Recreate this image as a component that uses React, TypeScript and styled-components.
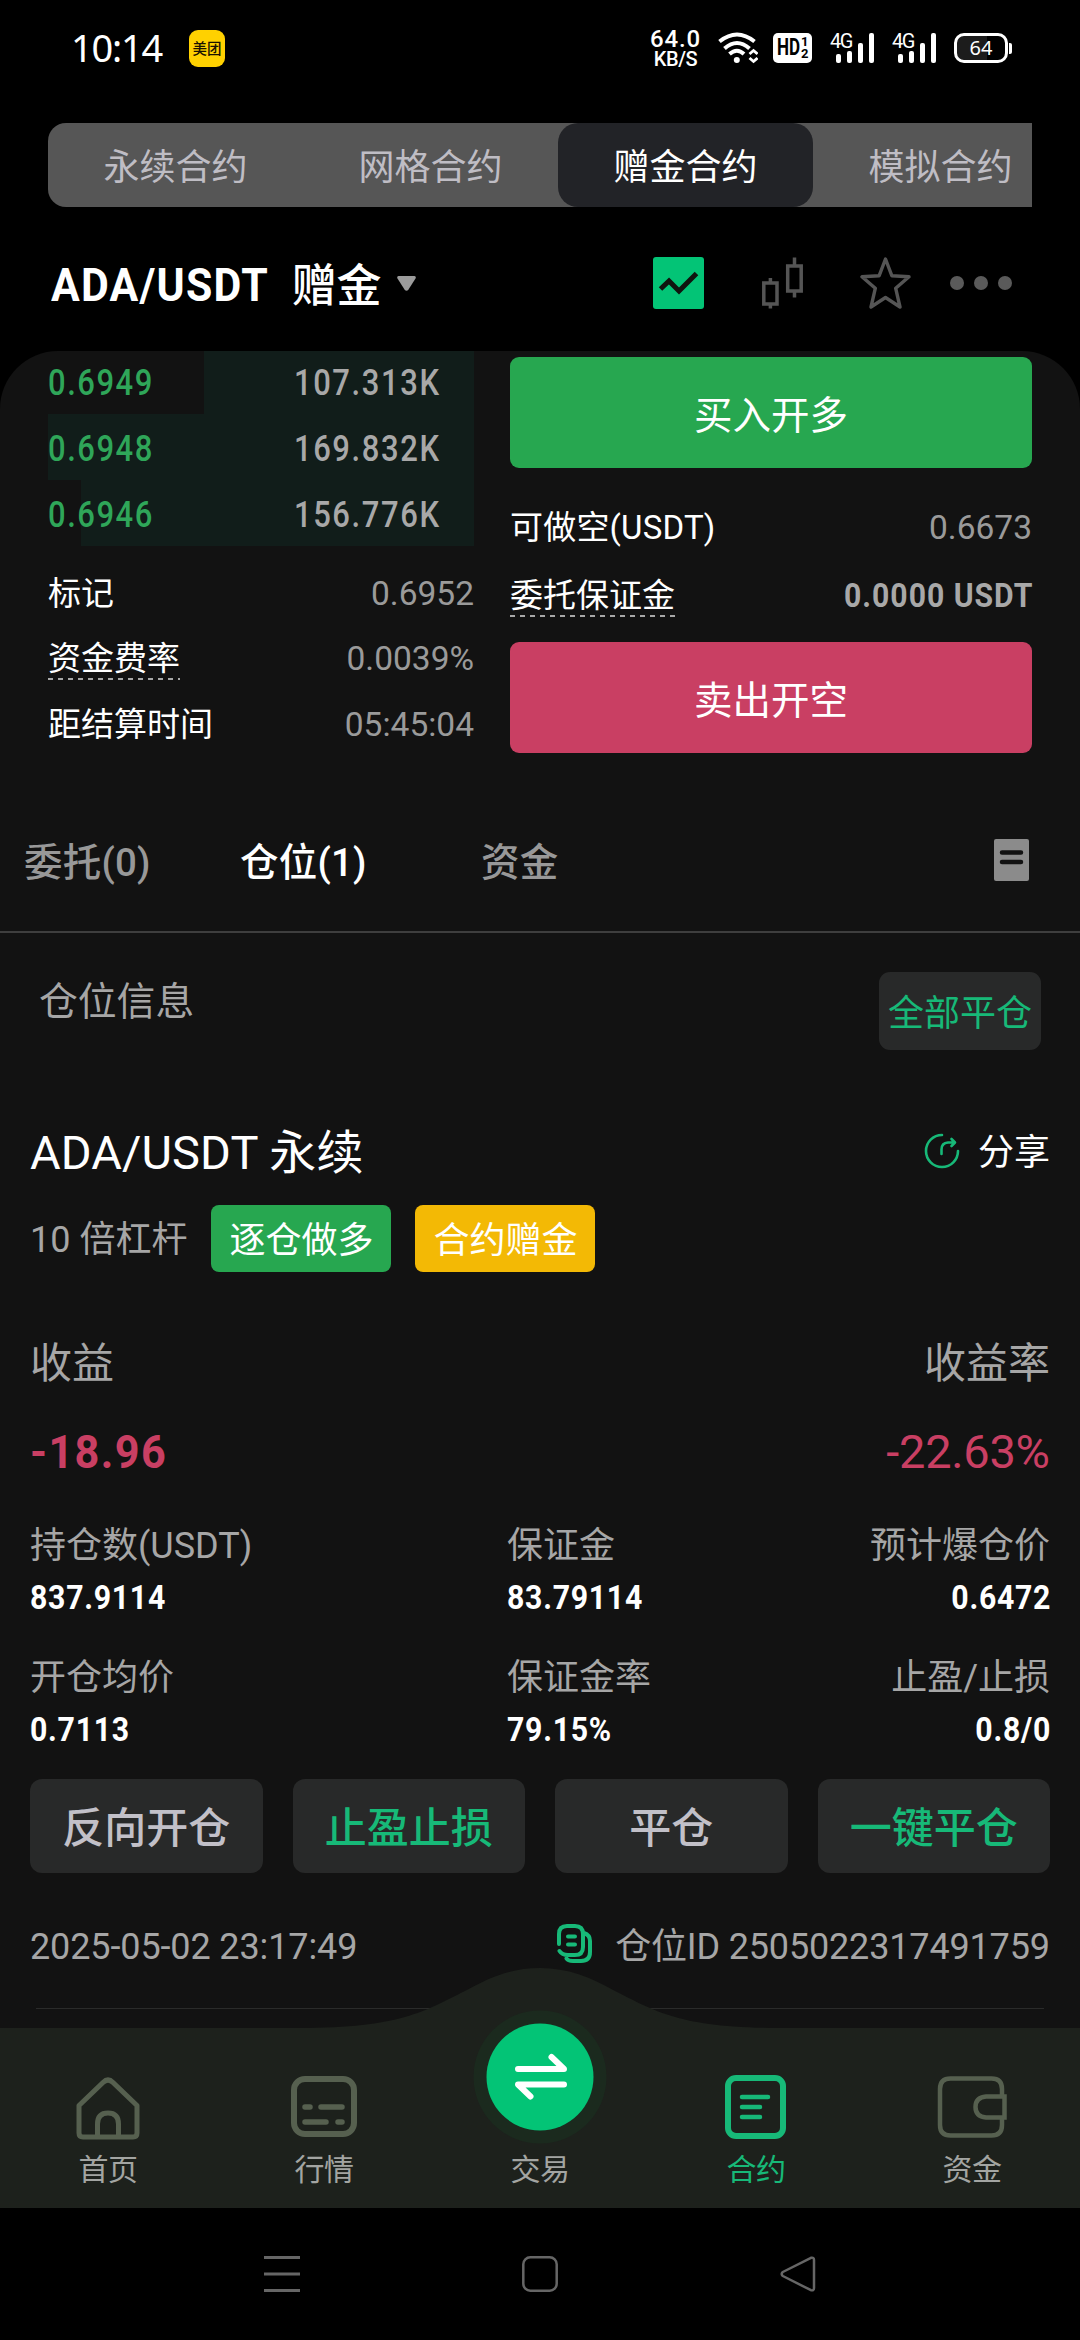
import React from "react";
import styled, { createGlobalStyle, css } from "styled-components";

const GlobalStyle = createGlobalStyle`
  * { box-sizing: border-box; }
  html, body { margin: 0; padding: 0; background: #000; }
  body { font-family: Roboto, "Noto Sans CJK SC", sans-serif; color: #fff; }
`;

const palette = {
  sheet: "#121212",
  muted: "#a6a6a6",
  green: "#27a750",
  accent: "#17b978",
  bright: "#03c476",
  red: "#c93f63",
  yellow: "#f3b905",
  chip: "#282929",
  nav: "#1d211c",
  navIcon: "#56604f",
};

const Screen = styled.div`
  width: 1080px;
  height: 2340px;
  display: flex;
  flex-direction: column;
  background: #000;
  overflow: hidden;
`;

/* One run of text: size, weight, colour and tracking vary by use. */
const Text = styled.span<{
  $size: number;
  $color?: string;
  $weight?: number;
  $track?: number;
}>`
  font-size: ${(p) => p.$size}px;
  line-height: ${(p) => Math.round(p.$size * 1.2)}px;
  color: ${(p) => p.$color ?? "#fff"};
  font-weight: ${(p) => p.$weight ?? 400};
  letter-spacing: ${(p) => p.$track ?? 0}px;
  margin-right: ${(p) => -(p.$track ?? 0)}px;
  white-space: nowrap;
`;

const Figure = styled(Text)<{ $narrow: number; $end?: boolean }>`
  display: inline-block;
  transform: scaleX(${(p) => p.$narrow});
  transform-origin: ${(p) => (p.$end ? "right" : "left")} center;
`;

/* ---------- status bar ---------- */
const StatusBar = styled.header`
  flex: none;
  height: 123px;
  padding: 25px 68px 0 71px;
  display: flex;
  justify-content: space-between;
  align-items: flex-start;
`;
const StatusSide = styled.div`
  height: 46px;
  display: flex;
  align-items: center;
`;
const Clock = styled.span`
  font-family: "Noto Sans", sans-serif;
  font-size: 38px;
  line-height: 46px;
  letter-spacing: -1.2px;
  width: 118px;
  padding-bottom: 3px;
`;
const Badge = styled.span`
  width: 36px;
  height: 37px;
  border-radius: 9px;
  background: #ffd100;
  color: #1a1200;
  font-family: "Noto Sans CJK SC", sans-serif;
  font-weight: 500;
  font-size: 14.5px;
  line-height: 36px;
  text-align: center;
`;
const Speed = styled.div`
  width: 51px;
  padding-top: 3px;
  display: flex;
  flex-direction: column;
  align-items: center;
  font-weight: 500;
`;
const SpeedValue = styled.span`
  font-size: 24px;
  line-height: 20px;
  letter-spacing: 0.9px;
`;
const SpeedUnit = styled.span`
  font-size: 20px;
  line-height: 21px;
  letter-spacing: -0.4px;
`;
const WifiSvg = styled.svg`
  margin-left: 17px;
`;
const Hd = styled.span`
  margin-left: 15px;
  width: 39px;
  height: 30px;
  padding-left: 4px;
  border-radius: 5px;
  background: #fff;
  color: #000;
  display: flex;
  align-items: center;
  font-weight: 700;
`;
const HdLetters = styled.span`
  width: 24px;
  font-size: 23px;
  line-height: 30px;
  transform: scaleX(0.74);
  transform-origin: left center;
`;
const HdStack = styled.span`
  display: flex;
  flex-direction: column;
  font-size: 13px;
  line-height: 12px;
`;
const Signal = styled.div<{ $gap: number }>`
  margin-left: ${(p) => p.$gap}px;
  width: 44px;
  height: 30px;
  position: relative;
`;
const SignalLabel = styled.span`
  position: absolute;
  left: 0;
  top: -1px;
  font-size: 20px;
  line-height: 18px;
  letter-spacing: -1.4px;
`;
const SignalBars = styled.div`
  height: 30px;
  padding-left: 6px;
  display: flex;
  align-items: flex-end;
  gap: 6px;
`;
const Bar = styled.i<{ $h: number }>`
  width: 5px;
  height: ${(p) => p.$h}px;
  border-radius: 2px;
  background: #fff;
`;
const Battery = styled.div`
  margin-left: 18px;
  width: 54px;
  height: 30px;
  border: 3px solid #fff;
  border-radius: 10px;
  background: linear-gradient(90deg, #1c1c1c 62%, #000 62%);
  font-family: "Noto Sans", sans-serif;
  font-size: 20px;
  line-height: 23px;
  text-align: center;
`;
const BatteryNub = styled.i`
  margin-left: 1px;
  width: 3px;
  height: 11px;
  border-radius: 0 2px 2px 0;
  background: #fff;
`;

/* ---------- contract type tabs ---------- */
const TypeTabs = styled.nav`
  flex: none;
  margin: 0 48px;
  height: 84px;
  display: flex;
  border-radius: 18px 0 0 18px;
  background: #565656;
  overflow: hidden;
`;
const TypeTab = styled.div<{ $active?: boolean }>`
  flex: none;
  width: 255px;
  padding-top: 6px;
  border-radius: 20px;
  display: flex;
  align-items: center;
  justify-content: center;
  font-size: 36px;
  line-height: 44px;
  color: ${(p) => (p.$active ? "#fff" : "#bfbdc4")};
  background: ${(p) => (p.$active ? "#222327" : "transparent")};
`;

/* ---------- pair header ---------- */
const PairHeader = styled.div`
  flex: none;
  height: 144px;
  padding: 8px 68px 0 51px;
  display: flex;
  justify-content: space-between;
  align-items: center;
`;
const PairTitle = styled.div`
  display: flex;
  align-items: center;
`;
const PairName = styled(Figure)`
  width: 217px;
  padding-top: 5px;
`;
const PairKind = styled.span`
  margin-left: 25px;
  padding-top: 8px;
  font-size: 45px;
  line-height: 54px;
  font-weight: 500;
  letter-spacing: -0.3px;
`;
const Caret = styled.svg`
  margin-left: 16px;
`;
const Tools = styled.div`
  display: flex;
  align-items: center;
  svg:nth-child(2) { margin-left: 58px; }
  svg:nth-child(3) { margin-left: 57px; }
  svg:nth-child(4) { margin-left: 39px; }
`;

/* ---------- sheet ---------- */
const Sheet = styled.main`
  flex: 1;
  min-height: 0;
  border-radius: 58px 58px 0 0;
  background: ${palette.sheet};
  overflow: hidden;
  display: flex;
  flex-direction: column;
`;
const Trade = styled.section`
  flex: none;
  height: 439px;
  padding: 0 48px;
  display: grid;
  grid-template-columns: 426px 522px;
  column-gap: 36px;
`;
const Column = styled.div`
  display: flex;
  flex-direction: column;
`;
const OrderColumn = styled(Column)`
  padding-top: 6px;
`;
const BookRow = styled.div<{ $start: number; $cut?: boolean }>`
  flex: none;
  height: ${(p) => (p.$cut ? 63 : 66)}px;
  padding: ${(p) => (p.$cut ? 1 : 4)}px 35px 0 0;
  display: flex;
  justify-content: space-between;
  align-items: center;
  background: linear-gradient(
    90deg,
    transparent ${(p) => p.$start}px,
    #111d1a ${(p) => p.$start}px
  );
`;
const StatRow = styled.div`
  flex: none;
  height: 65.5px;
  display: flex;
  justify-content: space-between;
  align-items: center;
`;
const StatGroup = styled.div`
  margin-top: 15px;
`;
const Hint = styled.span<{ $drop: number }>`
  display: inline-block;
  font-size: 33px;
  line-height: 40px;
  white-space: nowrap;
  padding-bottom: ${(p) => p.$drop}px;
  margin-bottom: -${(p) => p.$drop}px;
  background: repeating-linear-gradient(90deg, #a8a8a8 0 5px, transparent 5px 10px)
    left bottom / 100% 2px no-repeat;
`;
const OrderButton = styled.button<{ $color: string }>`
  flex: none;
  height: 111px;
  border: 0;
  border-radius: 9px;
  padding: 6px 0 0;
  background: ${(p) => p.$color};
  color: #fff;
  font: inherit;
  font-size: 38.5px;
  line-height: 46px;
`;
const OrderStats = styled.div`
  flex: none;
  height: 174px;
  padding-top: 26px;
`;
const OrderStat = styled(StatRow)`
  height: 68px;
`;

/* ---------- position tabs ---------- */
const PositionTabs = styled.nav`
  flex: none;
  height: 143px;
  padding: 5px 51px 0 24px;
  border-bottom: 2px solid #3e3e3e;
  display: flex;
  align-items: center;
`;
const PositionTab = styled.span<{ $active?: boolean; $w: number }>`
  width: ${(p) => p.$w}px;
  font-size: 38.5px;
  line-height: 46px;
  font-weight: 500;
  letter-spacing: 0.2px;
  color: ${(p) => (p.$active ? "#fff" : "#989898")};
`;
const Spacer = styled.div`
  flex: 1;
`;
const RecordsIcon = styled.svg`
  margin-bottom: 6px;
`;
const InfoHead = styled.div`
  flex: none;
  height: 144px;
  padding: 39px 39px 0 39px;
  display: flex;
  justify-content: space-between;
  align-items: flex-start;
`;
const InfoTitle = styled(Text)`
  margin-top: 6px;
`;
const CloseAll = styled.button`
  width: 162px;
  height: 78px;
  border: 0;
  border-radius: 11px;
  padding: 6px 0 0;
  background: ${palette.chip};
  color: ${palette.accent};
  font: inherit;
  font-size: 36px;
  line-height: 44px;
  white-space: nowrap;
`;

/* ---------- position card ---------- */
const Card = styled.section`
  flex: none;
  padding: 0 30px;
  display: flex;
  flex-direction: column;
`;
const Line = styled.div<{ $h: number }>`
  height: ${(p) => p.$h}px;
  display: flex;
  align-items: center;
  justify-content: space-between;
`;
const TitleLine = styled(Line)`
  padding-top: 32px;
`;
const Share = styled.div`
  display: flex;
  align-items: center;
  gap: 18px;
`;
const ShareIcon = styled.svg`
  margin-bottom: 4px;
`;
const TagLine = styled.div`
  height: 67px;
  margin-top: 8px;
  display: flex;
  align-items: center;
`;
const Leverage = styled(Text)`
  padding-top: 4px;
`;
const Tag = styled.span<{ $color: string; $gap: number }>`
  width: 180px;
  height: 67px;
  margin-left: ${(p) => p.$gap}px;
  padding-top: 4px;
  border-radius: 8px;
  background: ${(p) => p.$color};
  font-size: 36px;
  line-height: 64px;
  text-align: center;
`;
const LabelLine = styled(Line)`
  margin-top: 62px;
`;
const ProfitLine = styled(Line)`
  margin-top: 28px;
  margin-bottom: 43px;
`;
const Metrics = styled.div`
  display: grid;
  grid-template-columns: 477px 1fr 1fr;
  grid-template-rows: 132px 122px;
`;
const Metric = styled.div<{ $end?: boolean }>`
  display: flex;
  flex-direction: column;
  gap: 9px;
  ${(p) =>
    p.$end &&
    css`
      align-items: flex-end;
    `}
`;
const Actions = styled.div`
  display: grid;
  grid-template-columns: repeat(4, 1fr);
  column-gap: 30px;
`;
const Action = styled.button<{ $accent?: boolean }>`
  height: 94px;
  border: 0;
  border-radius: 12px;
  padding: 6px 0 0;
  background: ${palette.chip};
  color: ${(p) => (p.$accent ? palette.accent : "#c2c0c8")};
  font: inherit;
  font-size: 42px;
  line-height: 50px;
  font-weight: 500;
`;
const IdLine = styled(Line)`
  padding-top: 14px;
`;
const IdGroup = styled.div`
  display: flex;
  align-items: center;
  gap: 23px;
`;
const CopyIcon = styled.svg`
  margin-bottom: 8px;
`;
const Divider = styled.hr`
  width: 1008px;
  height: 1px;
  margin: 0 auto;
  border: 0;
  background: #2a2b2a;
`;

/* ---------- app navigation ---------- */
const AppNav = styled.nav`
  flex: none;
  position: relative;
  height: 180px;
  background: ${palette.nav};
  display: grid;
  grid-template-columns: repeat(5, 216px);
`;
const Hump = styled.svg`
  position: absolute;
  left: 300px;
  top: -61px;
`;
const NavItem = styled.div<{ $active?: boolean }>`
  position: relative;
  display: flex;
  flex-direction: column;
  align-items: center;
  padding-top: 46px;
  color: ${(p) => (p.$active ? palette.accent : palette.navIcon)};
`;
const NavLabel = styled.span<{ $active?: boolean }>`
  margin-top: 12px;
  font-size: 30px;
  line-height: 36px;
  letter-spacing: -0.5px;
  color: ${(p) => (p.$active ? palette.accent : "#a3a5a2")};
`;
const SwapButton = styled.svg`
  margin: -64px 0 -4px;
`;

const SystemNav = styled.footer`
  flex: none;
  height: 132px;
  display: flex;
  justify-content: center;
  align-items: center;
  gap: 222px;
`;

const SignalIcon = ({ gap }: { gap: number }) => (
  <Signal $gap={gap}>
    <SignalLabel>4G</SignalLabel>
    <SignalBars>
      {[9, 12, 20, 30].map((h) => (
        <Bar key={h} $h={h} />
      ))}
    </SignalBars>
  </Signal>
);

const navIcons = {
  home: (
    <svg width="66" height="66" viewBox="0 0 66 66" fill="none" stroke="currentColor" strokeWidth="5" strokeLinejoin="round">
      <path d="M4 31.5 28 8.5Q33 3.5 38 8.5L62 31.5V59Q62 63 58 63H8Q4 63 4 59Z" />
      <path d="M22.5 63V50Q22.500 39 33 39T43.500 50V63" />
    </svg>
  ),
  quotes: (
    <svg width="66" height="66" viewBox="0 0 66 66" fill="none" stroke="currentColor" strokeWidth="6" strokeLinecap="round">
      <rect x="3" y="5" width="60" height="55" rx="11" />
      <path d="M14 33h5M30 33h21M14 48h21M47 48h4" strokeWidth="5.500" />
    </svg>
  ),
  contract: (
    <svg width="66" height="66" viewBox="0 0 66 66" fill="none" stroke="currentColor" strokeWidth="6" strokeLinecap="round">
      <rect x="5" y="4" width="55" height="58" rx="8" />
      <path d="M19 23h26M19 33h18M19 43h18" strokeWidth="4.500" />
    </svg>
  ),
  wallet: (
    <svg width="70" height="66" viewBox="0 0 70 66" fill="none" stroke="currentColor" strokeWidth="4.500">
      <path d="M65 23V15Q65 4.500 54.500 4.500H13.500Q3 4.500 3 15V51Q3 61.500 13.500 61.500H54.500Q65 61.500 65 51V43" />
      <path d="M67.500 22.500V43.500H49Q38.500 42.500 38.500 33T49 22.500Z" />
    </svg>
  ),
};

const metrics = [
  ["持仓数(USDT)", "837.9114"],
  ["保证金", "83.79114"],
  ["预计爆仓价", "0.6472"],
  ["开仓均价", "0.7113"],
  ["保证金率", "79.15%"],
  ["止盈/止损", "0.8/0"],
];

const book = [
  { price: "0.6949", size: "107.313K", start: 156 },
  { price: "0.6948", size: "169.832K", start: 0 },
  { price: "0.6946", size: "156.776K", start: 33 },
];

export default function App() {
  return (
    <Screen>
      <GlobalStyle />
      <StatusBar>
        <StatusSide>
          <Clock>10:14</Clock>
          <Badge>美团</Badge>
        </StatusSide>
        <StatusSide>
          <Speed>
            <SpeedValue>64.0</SpeedValue>
            <SpeedUnit>KB/S</SpeedUnit>
          </Speed>
          <WifiSvg width="40" height="32" viewBox="0 0 40 32" fill="none" stroke="#fff" strokeWidth="4">
            <path d="M1.500 9.500Q19 -4.500 36.500 9.500M6.500 16.500Q19 5.500 31.500 16.500M11.500 22Q19 15.500 26 22" />
            <circle cx="18.800" cy="28" r="3" fill="#fff" stroke="none" />
            <path d="M31.500 22 35.500 18.500 39.500 22M31.500 26 35.500 29.500 39.500 26" strokeWidth="2.800" />
          </WifiSvg>
          <Hd>
            <HdLetters>HD</HdLetters>
            <HdStack>
              <span>1</span>
              <span>2</span>
            </HdStack>
          </Hd>
          <SignalIcon gap={18} />
          <SignalIcon gap={18} />
          <Battery>64</Battery>
          <BatteryNub />
        </StatusSide>
      </StatusBar>

      <TypeTabs>
        <TypeTab>永续合约</TypeTab>
        <TypeTab>网格合约</TypeTab>
        <TypeTab $active>赠金合约</TypeTab>
        <TypeTab>模拟合约</TypeTab>
      </TypeTabs>

      <PairHeader>
        <PairTitle>
          <PairName $size={46} $weight={700} $narrow={0.93} $track={1.3}>ADA/USDT</PairName>
          <PairKind>赠金</PairKind>
          <Caret width="19" height="15" viewBox="0 0 19 15">
            <path d="M1.500 0H17.500Q19.500 .5 18.500 2.500L11.500 13.500Q9.500 16 7.500 13.500L.5 2.500Q-.5 .5 1.500 0Z" fill="#9b9b9b" />
          </Caret>
        </PairTitle>
        <Tools>
          <svg width="51" height="52" viewBox="0 0 51 52">
            <rect width="51" height="52" rx="3" fill={palette.bright} />
            <path d="M7.500 32 16 24 26 34 43.500 16.500" fill="none" stroke="#10150f" strokeWidth="5" />
          </svg>
          <svg width="41" height="52" viewBox="0 0 41 52" fill="none" stroke="#555" strokeWidth="3.500">
            <path d="M1.800 26h13.200v21H1.800zM25.700 9h13.500v25H25.700zM8.400 26v-5M8.400 47v4.500M32.500 9V0.500M32.500 34v6.500" />
          </svg>
          <svg width="51" height="52" viewBox="0 0 51 52" fill="none" stroke="#555" strokeWidth="3.400" strokeLinejoin="round">
            <path d="M25.500 2 31.800 18.700 49 19.800 35.700 31.300 40 50 25.500 40.500 11 50 15.300 31.300 2 19.800 19.200 18.700Z" />
          </svg>
          <svg width="62" height="14" viewBox="0 0 62 14" fill="#5a5a5a">
            <circle cx="7" cy="7" r="7" />
            <circle cx="31" cy="7" r="7" />
            <circle cx="55" cy="7" r="7" />
          </svg>
        </Tools>
      </PairHeader>

      <Sheet>
        <Trade>
          <Column>
            {book.map((r, i) => (
              <BookRow key={r.price} $start={r.start} $cut={i === 0}>
                <Figure $size={36} $weight={500} $color="#2fa659" $narrow={0.86} $track={1.8}>
                  {r.price}
                </Figure>
                <Figure $size={36} $weight={500} $color="#a8a8a8" $narrow={0.86} $track={1.9} $end>
                  {r.size}
                </Figure>
              </BookRow>
            ))}
            <StatGroup>
              <StatRow>
                <Text $size={33}>标记</Text>
                <Text $size={33.5} $color="#9a9a9a">0.6952</Text>
              </StatRow>
              <StatRow>
                <Hint $drop={1}>资金费率</Hint>
                <Text $size={33.5} $color="#9a9a9a">0.0039%</Text>
              </StatRow>
              <StatRow>
                <Text $size={33}>距结算时间</Text>
                <Text $size={33.5} $color="#9a9a9a">05:45:04</Text>
              </StatRow>
            </StatGroup>
          </Column>
          <OrderColumn>
            <OrderButton $color={palette.green}>买入开多</OrderButton>
            <OrderStats>
              <OrderStat>
                <Text $size={33} $track={0.2}>可做空(USDT)</Text>
                <Text $size={33.5} $color="#9a9a9a">0.6673</Text>
              </OrderStat>
              <OrderStat>
                <Hint $drop={1}>委托保证金</Hint>
                <Figure $size={33.5} $weight={700} $color="#a8a8a8" $narrow={0.9} $track={1.1} $end>
                  0.0000 USDT
                </Figure>
              </OrderStat>
            </OrderStats>
            <OrderButton $color={palette.red}>卖出开空</OrderButton>
          </OrderColumn>
        </Trade>

        <PositionTabs>
          <PositionTab $w={216}>委托(0)</PositionTab>
          <PositionTab $w={241} $active>仓位(1)</PositionTab>
          <PositionTab $w={80}>资金</PositionTab>
          <Spacer />
          <RecordsIcon width="35" height="42" viewBox="0 0 35 42">
            <rect width="35" height="42" rx="2" fill="#8b8b8b" />
            <path d="M8 13.500H27M8 23H27" stroke="#121212" strokeWidth="4.500" strokeLinecap="round" />
          </RecordsIcon>
        </PositionTabs>

        <InfoHead>
          <InfoTitle $size={38.8} $color={palette.muted}>仓位信息</InfoTitle>
          <CloseAll>全部平仓</CloseAll>
        </InfoHead>

        <Card>
          <TitleLine $h={120}>
            <Text $size={47} $track={0.1}>ADA/USDT 永续</Text>
            <Share>
              <ShareIcon width="36" height="36" viewBox="0 0 36 36" fill="none" stroke={palette.accent} strokeWidth="2.600" strokeLinecap="round" strokeLinejoin="round">
                <path d="M18 2A16 16 0 1 0 34 18M17.500 21V16.500Q17.500 10 24 9.500H30M27.500 6 31 9.500 27.500 13" />
              </ShareIcon>
              <Text $size={36}>分享</Text>
            </Share>
          </TitleLine>
          <TagLine>
            <Leverage $size={36} $color={palette.muted}>10 倍杠杆</Leverage>
            <Tag $color={palette.green} $gap={24}>逐仓做多</Tag>
            <Tag $color={palette.yellow} $gap={24}>合约赠金</Tag>
          </TagLine>
          <LabelLine $h={60}>
            <Text $size={42} $color={palette.muted}>收益</Text>
            <Text $size={42} $color={palette.muted}>收益率</Text>
          </LabelLine>
          <ProfitLine $h={60}>
            <Figure $size={47} $weight={700} $color={palette.red} $narrow={0.92} $track={1.5}>
              -18.96
            </Figure>
            <Text $size={47} $color={palette.red} $track={-0.3}>-22.63%</Text>
          </ProfitLine>
          <Metrics>
            {metrics.map(([label, value], i) => (
              <Metric key={label} $end={i % 3 === 2}>
                <Text $size={36} $color={palette.muted}>{label}</Text>
                <Figure $size={34} $weight={700} $narrow={0.89} $track={0.8} $end={i % 3 === 2}>
                  {value}
                </Figure>
              </Metric>
            ))}
          </Metrics>
          <Actions>
            <Action>反向开仓</Action>
            <Action $accent>止盈止损</Action>
            <Action>平仓</Action>
            <Action $accent>一键平仓</Action>
          </Actions>
          <IdLine $h={135}>
            <Text $size={36} $color={palette.muted} $track={-0.12}>2025-05-02 23:17:49</Text>
            <IdGroup>
              <CopyIcon width="35" height="39" viewBox="0 0 35 39" fill="none" stroke={palette.accent} strokeWidth="4" strokeLinecap="round">
                <path d="M2 20V10Q2 2 10 2H18Q26 2 26 10V23Q26 31 18 31H11Q5 31 2.500 27M27 9Q33 11 33 17V28Q33 37 24 37H16Q11 37 9.500 34.500M11 12.500H18M11 20.500H18" />
              </CopyIcon>
              <Text $size={36} $color={palette.muted} $track={-0.16}>仓位ID 2505022317491759</Text>
            </IdGroup>
          </IdLine>
          <Divider />
        </Card>
      </Sheet>

      <AppNav>
        <Hump width="480" height="64" viewBox="0 0 480 64">
          <path d="M0 61C100 61 125 44 165 24C190 10 212 1 240 1S290 10 315 24C355 44 380 61 480 61V64H0Z" fill={palette.nav} />
        </Hump>
        <NavItem>
          {navIcons.home}
          <NavLabel>首页</NavLabel>
        </NavItem>
        <NavItem>
          {navIcons.quotes}
          <NavLabel>行情</NavLabel>
        </NavItem>
        <NavItem>
          <SwapButton width="134" height="134" viewBox="0 0 134 134">
            <circle cx="67" cy="67" r="66.500" fill="#1b2a1e" />
            <circle cx="67" cy="67" r="53.500" fill={palette.bright} />
            <path d="M45 59H91L78.500 47M91 74.500H45L57.500 86.500" fill="none" stroke="#fff" strokeWidth="6" strokeLinecap="round" strokeLinejoin="round" />
          </SwapButton>
          <NavLabel>交易</NavLabel>
        </NavItem>
        <NavItem $active>
          {navIcons.contract}
          <NavLabel $active>合约</NavLabel>
        </NavItem>
        <NavItem>
          {navIcons.wallet}
          <NavLabel>资金</NavLabel>
        </NavItem>
      </AppNav>

      <SystemNav>
        <svg width="36" height="38" viewBox="0 0 36 38" stroke="#666" strokeWidth="3">
          <path d="M0 2.500H36M0 19H36M0 35.500H36" />
        </svg>
        <svg width="36" height="36" viewBox="0 0 36 36" fill="none" stroke="#666" strokeWidth="2.500">
          <rect x="1.300" y="1.300" width="33.400" height="33.400" rx="7" />
        </svg>
        <svg width="36" height="36" viewBox="0 0 36 36" fill="none" stroke="#666" strokeWidth="2.500" strokeLinejoin="round">
          <path d="M31 1.800 2.800 16Q.5 18 2.800 20L31 34.200Q34 35 34 32V4Q34 1 31 1.800Z" />
        </svg>
      </SystemNav>
    </Screen>
  );
}
